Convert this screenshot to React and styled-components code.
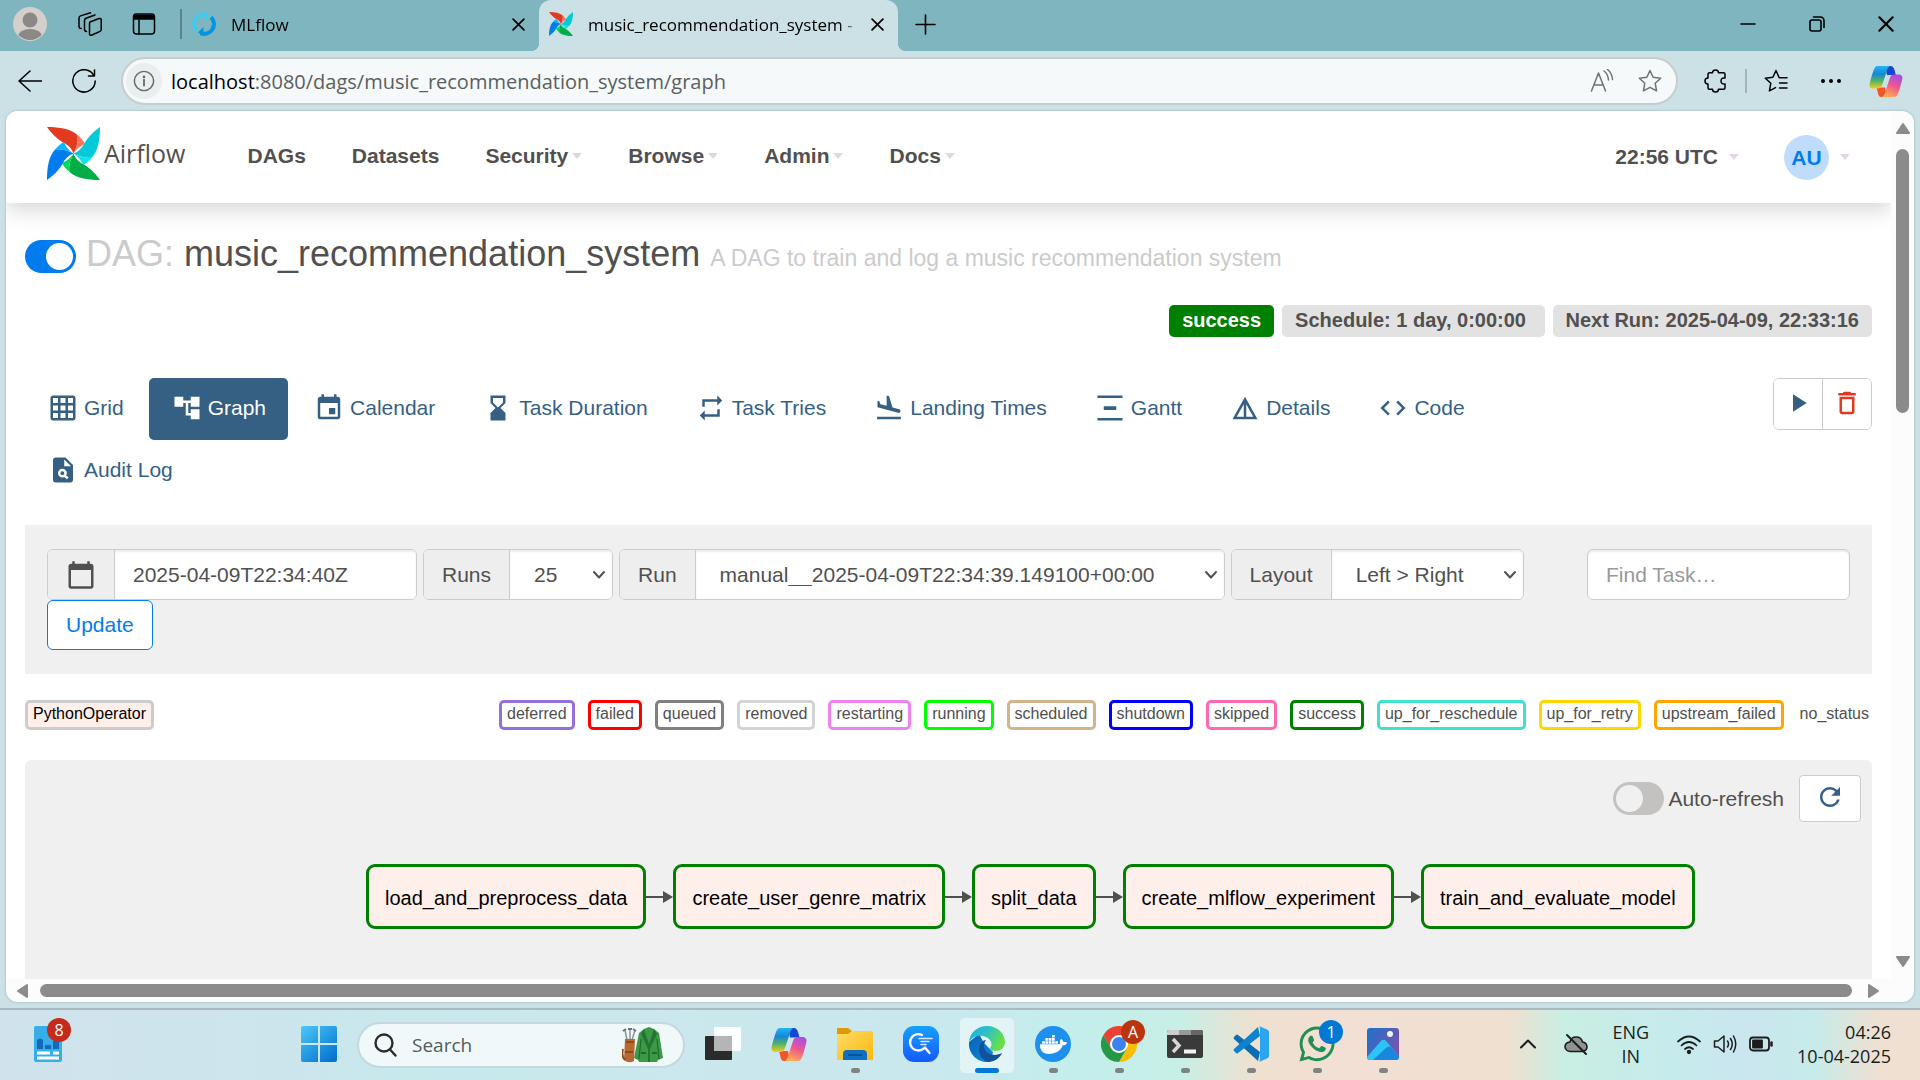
import React from "react";
import styled, { createGlobalStyle } from "styled-components";
import {
  MdGridOn, MdAccountTree, MdEvent, MdHourglassBottom, MdRepeat, MdFlightLand,
  MdVerticalDistribute, MdDetails, MdCode, MdPlagiarism, MdPlayArrow,
  MdDeleteOutline, MdCalendarToday, MdRefresh,
} from "react-icons/md";
import { FaDocker, FaWhatsapp } from "react-icons/fa6";

const ui = `"Segoe UI", "Open Sans", "Noto Sans", sans-serif`;
const arial = `"Liberation Sans", Arial, sans-serif`;

const GlobalStyle = createGlobalStyle`
  *, *::before, *::after { box-sizing: border-box; }
  body { margin: 0; background: #cbe1e5; }
  button, input, select { font: inherit; color: inherit; margin: 0; }
  button { cursor: pointer; }
  svg { display: block; flex: none; }
`;

const Desktop = styled.div`
  height: 100vh;
  display: flex;
  flex-direction: column;
  overflow: hidden;
  background: #cbe1e5;
  font-family: ${ui};
  color: #000;
`;

/* ---------- browser chrome ---------- */

const TabStrip = styled.header`
  flex: none;
  height: 51px;
  display: flex;
  background: #7fb5bf;
  font-size: 17px;
`;
const StripTools = styled.div`
  display: flex;
  align-items: center;
  height: 48px;
`;
const PlainButton = styled.button`
  flex: none;
  display: flex;
  align-items: center;
  justify-content: center;
  width: ${(p) => p.$w || 36}px;
  height: 36px;
  padding: 0;
  border: 0;
  background: none;
`;
const Tab = styled.div`
  position: relative;
  flex: none;
  display: flex;
  align-items: center;
  width: ${(p) => p.$w}px;
  height: 51px;
  padding: 0 6px 3px 10px;
  border-radius: 12px 12px 0 0;
  background: ${(p) => (p.$active ? "#cbe1e5" : "transparent")};
  ${(p) => p.$active && `
    &::before, &::after {
      content: "";
      position: absolute;
      bottom: 0;
      width: 8px;
      height: 8px;
    }
    &::before { left: -8px; background: radial-gradient(circle at 0 0, transparent 8px, #cbe1e5 8px); }
    &::after { right: -8px; background: radial-gradient(circle at 100% 0, transparent 8px, #cbe1e5 8px); }
  `}
`;
const TabTitle = styled.span`
  flex: 1;
  padding-left: 15px;
  white-space: nowrap;
  mask-image: linear-gradient(to right, #000 92%, transparent);
`;
const StripDivider = styled.span`
  width: 2px;
  height: 30px;
  margin-left: 12px;
  background: #5a838b;
`;
const NewTabSlot = styled.div`
  display: flex;
  align-items: center;
  height: 48px;
`;
const WindowControls = styled.div`
  display: flex;
  align-items: center;
  height: 48px;
  margin-left: auto;
`;

const Toolbar = styled.div`
  flex: none;
  display: flex;
  align-items: center;
  height: 60px;
  padding: 0 16px 0 12px;
`;
const NavButtons = styled.div`
  display: flex;
  gap: 18px;
  margin-right: 19px;
`;
const AddressBar = styled.div`
  flex: 1;
  display: flex;
  align-items: center;
  height: 48px;
  padding: 0 8px 0 3px;
  border: 2px solid #c9cccd;
  border-radius: 24px;
  background: #f5f9fa;
  font-size: 20px;
`;
const InfoDisc = styled.span`
  display: flex;
  align-items: center;
  justify-content: center;
  width: 36px;
  height: 36px;
  border-radius: 50%;
  background: #e9eeef;
`;
const Url = styled.span`
  flex: 1;
  padding-left: 9px;
  color: #5c5e5f;
  white-space: nowrap;
  b { color: #000; font-weight: 400; }
`;
const AddressIcons = styled.span`
  display: flex;
  gap: 12px;
`;
const ToolbarRight = styled.div`
  display: flex;
  align-items: center;
  gap: 11px;
  margin-left: 20px;
`;
const ToolbarDivider = styled.span`
  width: 2px;
  height: 24px;
  background: #a4b3b7;
`;

/* ---------- page frame with scrollbars ---------- */

const Frame = styled.div`
  flex: 1;
  min-height: 0;
  display: grid;
  grid-template: minmax(0, 1fr) 23px / minmax(0, 1fr) 23px;
  margin: 0 6px 6px;
  border-radius: 12px;
  overflow: hidden;
  background: #fcfcfc;
  box-shadow: 0 0 2px 1px #b3cbd0;
`;
const Page = styled.div`
  display: flex;
  flex-direction: column;
  overflow: hidden;
  background: #fff;
  color: #51504f;
  font-family: ${arial};
  font-size: 21px;
`;
const VScroll = styled.div`
  display: flex;
  flex-direction: column;
  align-items: center;
  padding: 10px 0;
`;
const HScroll = styled.div`
  display: flex;
  align-items: center;
  padding: 0 10px 0 9px;
  gap: 11px;
`;
const Thumb = styled.div`
  border-radius: 7px;
  background: #8b8b8b;
  ${(p) => (p.$vertical ? "width: 13px; height: 264px; margin: 14px 0 auto;" : "height: 13px; flex: 1; margin-right: 4px;")}
`;

/* ---------- Airflow navigation bar ---------- */

const NavBar = styled.nav`
  flex: none;
  display: flex;
  align-items: center;
  height: 92px;
  padding: 0 41px;
  background: #fff;
  box-shadow: 0 5px 22px rgba(0, 0, 0, 0.19);
  font-weight: 700;
`;
const Brand = styled.a`
  display: flex;
  align-items: center;
  gap: 4px;
  padding-bottom: 8px;
  margin-right: 39px;
  color: #51504f;
  text-decoration: none;
  font: 400 25px ${ui};
`;
const NavLink = styled.a`
  display: flex;
  align-items: center;
  gap: 4px;
  padding: 0 23px 2px;
  color: #51504f;
  text-decoration: none;
`;
const Caret = styled.span`
  border: solid transparent;
  border-width: 6px 5px 0;
  border-top-color: #e0d5e3;
`;
const NavRight = styled.div`
  display: flex;
  align-items: center;
  gap: 45px;
  margin-left: auto;
`;
const MenuButton = styled.button`
  display: flex;
  align-items: center;
  gap: 11px;
  padding: 0;
  border: 0;
  background: none;
`;
const Avatar = styled.span`
  width: 45px;
  height: 45px;
  border-radius: 50%;
  background: #c0dcfc;
  color: #017cee;
  line-height: 45px;
  text-align: center;
`;

/* ---------- DAG heading ---------- */

const Main = styled.main`
  flex: 1;
  min-height: 0;
  display: flex;
  flex-direction: column;
  padding: 30px 19px 0;
`;
const TitleRow = styled.div`
  flex: none;
  display: flex;
  align-items: flex-end;
  gap: 10px;
`;
const Switch = styled.input`
  appearance: none;
  flex: none;
  display: flex;
  width: 51px;
  height: 33px;
  padding: 3px;
  border-radius: 17px;
  background: #c4c2c1;
  &::before {
    content: "";
    width: 27px;
    height: 27px;
    border-radius: 50%;
    background: #f0f0f0;
  }
  &:checked { background: #017cee; justify-content: flex-end; }
  &:checked::before { background: #fff; }
`;
const Title = styled.h1`
  height: 40px;
  margin: 0;
  font-size: 36px;
  font-weight: 400;
  line-height: 42px;
  white-space: nowrap;
  color: #cbcbcb;
  a { color: #51504f; text-decoration: none; }
  small { font-size: 23px; line-height: 1; }
`;
const Badges = styled.div`
  flex: none;
  display: flex;
  justify-content: flex-end;
  gap: 8px;
  margin-top: 32px;
`;
const Badge = styled.a`
  height: 32px;
  padding: 0 13px;
  border-radius: 5px;
  background: ${(p) => (p.$success ? "#008000" : "#e2e2e2")};
  color: ${(p) => (p.$success ? "#fff" : "#51504f")};
  font-size: 20px;
  font-weight: 700;
  line-height: 31px;
  text-decoration: none;
`;

const ViewRow = styled.div`
  flex: none;
  display: flex;
  align-items: flex-start;
  justify-content: space-between;
  margin: 41px 0 23px;
`;
const Pills = styled.div`
  display: flex;
  flex-wrap: wrap;
  column-gap: 3px;
  width: 83%;
`;
const Pill = styled.a`
  display: flex;
  align-items: center;
  gap: 6px;
  height: 62px;
  padding: 0 22px 2px 23px;
  border-radius: 5px;
  background: ${(p) => (p.$active ? "#365f84" : "transparent")};
  color: ${(p) => (p.$active ? "#fff" : "#365f84")};
  text-decoration: none;
`;
const ButtonGroup = styled.div`
  display: flex;
  border: 1px solid #ccc;
  border-radius: 6px;
  overflow: hidden;
`;
const GroupButton = styled.button`
  display: flex;
  justify-content: center;
  align-items: center;
  width: 48px;
  height: 50px;
  padding: 0 0 2px;
  border: 0;
  background: #fff;
  color: ${(p) => p.$color};
  & + & { border-left: 1px solid #ccc; width: 49px; }
`;

/* ---------- run filter ---------- */

const Filter = styled.form`
  flex: none;
  display: flex;
  gap: 38px;
  padding: 24px 22px;
  background: #f0f0f0;
`;
const FilterFields = styled.div`
  flex: 1;
  display: flex;
  flex-wrap: wrap;
  column-gap: 6px;
`;
const InputGroup = styled.div`
  display: flex;
  height: 51px;
  border: 1px solid #ccc;
  border-radius: 6px;
  overflow: hidden;
  background: #fff;
`;
const Addon = styled.label`
  display: flex;
  align-items: center;
  padding: 0 18px;
  border-right: 1px solid #ccc;
  background: #eee;
`;
const TextInput = styled.input`
  width: ${(p) => p.$w}px;
  height: ${(p) => (p.$boxed ? 51 : 49)}px;
  padding: 0 18px;
  border: ${(p) => (p.$boxed ? "1px solid #ccc" : "0")};
  border-radius: ${(p) => (p.$boxed ? 6 : 0)}px;
  background: #fff;
  box-shadow: inset 0 2px 2px rgba(0, 0, 0, 0.075);
  &::placeholder { color: #999; opacity: 1; }
`;
const SelectBox = styled.div`
  display: grid;
  align-items: center;
  width: ${(p) => p.$w}px;
  > * { grid-area: 1 / 1; }
  > svg { justify-self: end; margin-right: 6px; pointer-events: none; }
`;
const Select = styled.select`
  appearance: none;
  width: 100%;
  height: 49px;
  padding: 0 24px;
  border: 0;
  background: #fff;
  box-shadow: inset 0 2px 2px rgba(0, 0, 0, 0.075);
`;
const UpdateButton = styled.button`
  height: 50px;
  padding: 0 18px;
  border: 1px solid #017cee;
  border-radius: 6px;
  background: #fff;
  color: #017cee;
`;

/* ---------- legend ---------- */

const Legend = styled.div`
  flex: none;
  display: flex;
  justify-content: space-between;
  margin: 26px 0 30px;
  font-size: 16px;
`;
const States = styled.div`
  display: flex;
  gap: 13px;
`;
const Tag = styled.span`
  height: 30px;
  padding: 0 ${(p) => (p.$color ? 5 : 3)}px;
  border: ${(p) => (p.$color ? `3px solid ${p.$color}` : "0")};
  border-radius: 5px;
  background: ${(p) => p.$fill || "#fff"};
  color: ${(p) => (p.$fill ? "#000" : "#51504f")};
  line-height: ${(p) => (p.$color ? 22 : 28)}px;
  white-space: nowrap;
`;

/* ---------- graph ---------- */

const GraphPanel = styled.section`
  flex: 1;
  padding: 15px 11px 0;
  border-radius: 6px 6px 0 0;
  background: #f0f0f0;
`;
const GraphTools = styled.div`
  display: flex;
  justify-content: flex-end;
  align-items: center;
  gap: 15px;
`;
const SwitchLabel = styled.label`
  display: flex;
  align-items: center;
  gap: 4px;
`;
const RefreshButton = styled.button`
  display: flex;
  align-items: center;
  justify-content: center;
  width: 62px;
  height: 47px;
  padding: 0 0 4px;
  border: 1px solid #ccc;
  border-radius: 4px;
  background: #fff;
  color: #365f84;
`;
const Flow = styled.div`
  display: flex;
  align-items: center;
  margin-top: 42px;
  padding-left: 330px;
`;
const Node = styled.div`
  height: 65px;
  padding: 2px 16px 0;
  border: 3px solid #008000;
  border-radius: 9px;
  background: #ffefeb;
  color: #000;
  font-size: 20px;
  line-height: 59px;
  white-space: nowrap;
`;

/* ---------- taskbar ---------- */

const Taskbar = styled.footer`
  flex: none;
  display: flex;
  align-items: center;
  height: 72px;
  padding: 0 29px 0 30px;
  border-top: 2px solid #a9b9bf;
  background: linear-gradient(90deg, #d0e3ec 0%, #cce5ec 15%, #c7e9ec 21%, #cbe7ed 42%, #c8e9ed 50%,
    #c4eeec 56%, #c7efe6 61.5%, #f0e0cf 65.5%, #f2e0d4 70%, #f0e0cf 78.5%, #c9eee3 81.5%, #c6ebec 87%, #cae6ef 91%, #c6ebea 94.5%, #f0e0d1 98%);
`;
const AppButton = styled.button`
  position: relative;
  flex: none;
  display: flex;
  flex-direction: column;
  align-items: center;
  justify-content: center;
  width: 56px;
  height: 57px;
  padding: 0 0 2px;
  border: 1px solid ${(p) => (p.$active ? "#d3e6ea" : "transparent")};
  border-radius: 6px;
  background: ${(p) => (p.$active ? "#e3f4f6" : "transparent")};
  &::after {
    content: "";
    position: absolute;
    bottom: 0;
    width: ${(p) => (p.$active ? 24 : 9)}px;
    height: 5px;
    border-radius: 3px;
    background: ${(p) => (p.$active ? "#0078d4" : p.$open ? "#7d8482" : "transparent")};
  }
`;
const CountBadge = styled.span`
  position: absolute;
  top: ${(p) => p.$top}px;
  right: ${(p) => p.$right}px;
  width: 24px;
  height: 24px;
  border-radius: 50%;
  background: ${(p) => p.$color};
  color: #fff;
  font-size: 16px;
  line-height: 24px;
  text-align: center;
`;
const Widgets = styled(AppButton)`
  width: 36px;
  margin-right: 225px;
`;
const Apps = styled.div`
  display: flex;
  align-items: center;
  gap: 10px;
`;
const SearchBox = styled.label`
  display: flex;
  align-items: center;
  width: 328px;
  height: 46px;
  padding: 0 19px 0 14px;
  border: 2px solid #c3d9de;
  border-radius: 23px;
  background: #f0f8fa;
  font-size: 19px;
  color: #555b5d;
  input {
    flex: 1;
    min-width: 0;
    padding: 0 0 0 15px;
    border: 0;
    outline: 0;
    background: none;
  }
  input::placeholder { color: #555b5d; opacity: 1; }
`;
const Tray = styled.div`
  display: flex;
  align-items: center;
  margin-left: auto;
  padding-bottom: 2px;
  font-size: 18px;
  line-height: 24px;
  color: #1c1c1c;
`;
const TrayText = styled.div`
  text-align: ${(p) => p.$align};
  white-space: nowrap;
`;
const Status = styled.div`
  display: flex;
  gap: 12px;
  margin: 0 24px 0 28px;
`;
const TrayIcons = styled.div`
  display: flex;
  gap: 24px;
  margin-right: 24px;
`;

/* ---------- drawings ---------- */

function Line({ size = 24, w = 1.5, color = "currentColor", children, box = "0 0 24 24", height }) {
  return (
    <svg width={size} height={height || size} viewBox={box} fill="none" stroke={color} strokeWidth={w}
      strokeLinecap="round" strokeLinejoin="round" aria-hidden="true">{children}</svg>
  );
}

const blades = [
  ["#e43921", "#ff7557", 0], ["#04c9d7", "#11e1ee", 90],
  ["#00ad46", "#04d659", 180], ["#017cee", "#0cb6ff", 270],
];
function Pinwheel({ size }) {
  return (
    <svg width={size} height={size} viewBox="0 0 53 53" aria-hidden="true">
      {blades.map(([dark, light, turn]) => (
        <g key={turn} transform={`rotate(${turn} 26.5 26.5)`}>
          <path fill={dark} d="M0 0C13 0 24 2 30.500 8C31.500 14 29.500 21 26.500 26.500C25 22 21 17.500 16 15.500C10 12 5 7 0 0Z" />
          <path fill={light} d="M30.500 8C34 11 36.500 14 38 17C33 19 29.500 22 26.500 26.500C29.500 21 31.500 14 30.500 8Z" />
        </g>
      ))}
    </svg>
  );
}

function MlflowMark() {
  return (
    <svg width="24" height="24" viewBox="0 0 24 24" fill="none" strokeWidth="4" aria-hidden="true">
      <path stroke="#43c9ed" d="M5 18.800A9.700 9.700 0 0 1 15.500 2.900" />
      <path fill="#43c9ed" d="M12.500 0L18 3.500L12.500 9Z" />
      <path stroke="#0194e2" d="M19 5.200A9.700 9.700 0 0 1 8.500 21.100" />
      <path fill="#0194e2" d="M11.500 24L6 20.500L11.500 15Z" />
    </svg>
  );
}

function Copilot({ size = 36 }) {
  return (
    <svg width={size} height={size - 3} viewBox="0 0 36 33" aria-hidden="true">
      <defs>
        <linearGradient id="cpa" x1="0" y1="0" x2="0" y2="1">
          <stop offset="0" stopColor="#23b5f2" /><stop offset=".35" stopColor="#1488d8" />
          <stop offset=".65" stopColor="#4fb06a" /><stop offset="1" stopColor="#f5cd1b" />
        </linearGradient>
        <linearGradient id="cpb" x1=".7" y1="0" x2=".3" y2="1">
          <stop offset="0" stopColor="#a64bea" /><stop offset=".5" stopColor="#f0598b" /><stop offset="1" stopColor="#ffb152" />
        </linearGradient>
      </defs>
      <path fill="#1846cf" d="M17 0H23C25 0 26 1.500 27 4L28.500 9.500H19Z" />
      <path fill="#f4532b" d="M8 23H17L19 33H13C10.500 33 10 31 9.500 29Z" />
      <path fill="url(#cpa)" d="M9 0H22C20 1.500 19 4 18 8L14 20C13 23 12 24 9 24H4.500C1 24 0 21.500.7 18.500C2 13 3.500 8 5 4C6 1.500 7 0 9 0Z" />
      <path fill="url(#cpb)" d="M27 33H14C16 31.500 17 29 18 25L22 13C23 10 24 9 27 9H31.500C35 9 36 11.500 35.300 14.500C34 20 32.500 25 31 29C30 31.500 29 33 27 33Z" />
    </svg>
  );
}

function Arrow() {
  return (
    <svg width="27" height="14" viewBox="0 0 27 14" aria-hidden="true">
      <path d="M0 7H19" stroke="#51504f" strokeWidth="2" />
      <path d="M17 1L27 7L17 13Z" fill="#51504f" />
    </svg>
  );
}

function Tri({ turn }) {
  return (
    <svg width="14" height="14" viewBox="0 0 14 14" aria-hidden="true">
      <path transform={`rotate(${turn} 7 7)`} fill="#8b8b8b" stroke="#8b8b8b" strokeLinejoin="round" strokeWidth="2" d="M7 3L13 12H1Z" />
    </svg>
  );
}

const Chevron = () => <Line size={14} w={2} box="0 0 14 14"><path d="M2 4L7 9.500L12 4" /></Line>;
const Cross = ({ s = 12 }) => <Line size={s} w={1.6} box="0 0 12 12"><path d="M1 1L11 11M11 1L1 11" /></Line>;
const starPath = "M12 1.500L15.100 8.300L22.700 9.200L17.200 14.300L18.600 21.800L12 18.300L5.400 21.800L6.800 14.300L1.300 9.200L8.900 8.300Z";

function Jacket() {
  return (
    <svg width="42" height="36" viewBox="0 0 42 36" aria-hidden="true">
      <path d="M5 13L3 3M8 13L8 2M10 13L13 3" stroke="#8c9499" strokeWidth="1.500" />
      <path d="M1 4L4 2M6 2H10M11 2L14 4" stroke="#6b7479" strokeWidth="2" />
      <path d="M3 12H13L12 34Q7 37 2 33Z" fill="#b8672f" />
      <path d="M4 15H12M3 25H11" stroke="#7e401b" strokeWidth="1.500" />
      <path d="M1 22Q-1 29 3 33" stroke="#8a4a22" strokeWidth="2" fill="none" />
      <path d="M22 2L27 0L32 2L37 6L41 31L36 33L35 35H17L16 33L12 31L17 6Z" fill="#3c9a47" />
      <path d="M22 2L27 17L32 2L35 7L28 22V35H26V22L19 7Z" fill="#237533" />
      <path d="M19 12L17 32M35 12L37 32" stroke="#1d6a2c" strokeWidth="1.200" />
      <path d="M19 26H24M30 26H35" stroke="#195b26" strokeWidth="1.500" />
    </svg>
  );
}

const TaskView = () => (
  <svg width="36" height="36" viewBox="0 0 36 36" aria-hidden="true">
    <rect x="0" y="10" width="27" height="24" rx="1" fill="#2b2b2b" />
    <rect x="9" y="1" width="27" height="24" rx="1" fill="#fff" opacity=".92" />
    <rect x="9" y="10" width="18" height="15" fill="#b5b5b5" />
  </svg>
);
const Folder = () => (
  <svg width="36" height="34" viewBox="0 0 36 34" aria-hidden="true">
    <defs><linearGradient id="fld" x1="0" y1="0" x2="1" y2="1"><stop offset="0" stopColor="#ffdc66" /><stop offset="1" stopColor="#fbb80d" /></linearGradient></defs>
    <path fill="#dd9c05" d="M0 2Q0 1 1 1H11L15 4L12 8H0Z" />
    <path fill="url(#fld)" d="M0 7H11L15 4H35L36 5V33H0Z" />
    <path fill="#0f6fc0" d="M6 33V27Q6 23 10 23H26Q30 23 30 27V33Z" />
    <path stroke="#084b8a" strokeWidth="1.500" d="M11 28H25" />
  </svg>
);
const SearchApp = () => (
  <svg width="36" height="36" viewBox="0 0 36 36" fill="none" aria-hidden="true">
    <defs><linearGradient id="sap" x1="0" y1="0" x2="0" y2="1"><stop offset="0" stopColor="#17a0ff" /><stop offset="1" stopColor="#1559ff" /></linearGradient></defs>
    <rect width="36" height="36" rx="11" fill="url(#sap)" />
    <path d="M19 9A8.200 8.200 0 1 0 20 23L22 21.500L26.500 27" stroke="#fff" strokeWidth="2.300" strokeLinecap="round" strokeLinejoin="round" />
    <path d="M16 12.500H29M18 15.500H26M18 18.500H23" stroke="#d5ebff" strokeWidth="1.600" strokeLinecap="round" />
  </svg>
);
const Edge = () => (
  <svg width="36" height="36" viewBox="0 0 36 36" aria-hidden="true">
    <defs>
      <linearGradient id="ed1" x1="0" y1="0" x2="1" y2=".4"><stop offset="0" stopColor="#1fb0e8" /><stop offset=".5" stopColor="#2cc0c8" /><stop offset="1" stopColor="#66e04a" /></linearGradient>
      <linearGradient id="ed2" x1="0" y1="0" x2="1" y2="1"><stop offset="0" stopColor="#0a62b0" /><stop offset="1" stopColor="#0b8ae0" /></linearGradient>
    </defs>
    <path fill="url(#ed2)" d="M0 16A18 18 0 0 0 22 35.500L24 26L15 17L10 8Z" />
    <path fill="#10529b" d="M10 23C11 17 14 14 17 14C14 18 14 24 19 27C24 30 29 29 33 27C31 32 25 36 19 36C13 34 10 29 10 23Z" />
    <path fill="url(#ed1)" d="M0 16C1 6 9 0 18 0C29 0 36 8 36 16C36 21 32 25 27 25C23 25 21 24 21 22C23 20 23 17 21 14C17 9 6 7 0 16Z" />
  </svg>
);
const Docker = () => (
  <svg width="36" height="36" viewBox="0 0 36 36" aria-hidden="true">
    <circle cx="18" cy="18" r="18" fill="#1d8fec" />
    <FaDocker x="5" y="5" size={27} color="#fff" />
  </svg>
);
const Chrome = () => (
  <svg width="36" height="36" viewBox="0 0 36 36" aria-hidden="true">
    <path fill="#fbbc05" d="M33.600 9H18V18L25.800 22.500L18 36A18 18 0 0 0 33.600 9Z" />
    <path fill="#249a48" d="M2.400 9A18 18 0 0 0 18 36L25.800 22.500L10.200 22.500Z" />
    <path fill="#e94235" d="M2.400 9A18 18 0 0 1 33.600 9H18L10.200 22.500Z" />
    <circle cx="18" cy="18" r="9" fill="#fff" /><circle cx="18" cy="18" r="7" fill="#3b82f1" />
  </svg>
);
const Terminal = () => (
  <svg width="36" height="28" viewBox="0 0 36 28" aria-hidden="true">
    <rect width="36" height="28" rx="2" fill="#3a3a3a" />
    <path fill="#ccc" d="M2 0H12V5H0V2Q0 0 2 0Z" /><path fill="#999" d="M12 0H24V5H12Z" /><path fill="#666" d="M24 0H34Q36 0 36 2V5H24Z" />
    <path d="M6 9L12 15.500L6 22" fill="none" stroke="#d6d6d6" strokeWidth="3.500" /><path d="M17 21.500H29" stroke="#f2f2f2" strokeWidth="4" />
  </svg>
);
const Code = () => (
  <svg width="36" height="36" viewBox="0 0 36 36" aria-hidden="true">
    <path fill="#0b6db5" d="M3 9L1 11Q0 12 1 13L25 35L27 26L5 9Q4 8 3 9Z" />
    <path fill="#0d83cf" d="M3 27L1 25Q0 24 1 23L25 1L27 10L5 27Q4 28 3 27Z" />
    <path fill="#2aa5f0" d="M26 0L35 4Q36 5 36 6V30Q36 31 35 32L26 36Q27 35 27 33V3Q27 1 26 0Z" />
  </svg>
);
const Photos = () => (
  <svg width="32" height="32" viewBox="0 0 32 32" aria-hidden="true">
    <defs><linearGradient id="pht" x1="0" y1="0" x2="1" y2=".6"><stop offset="0" stopColor="#1b73cc" /><stop offset="1" stopColor="#7a52b0" /></linearGradient></defs>
    <rect width="32" height="32" rx="3" fill="url(#pht)" />
    <path fill="#2cc4f5" d="M0 29L14 13Q16.500 10.500 19 13L32 28V29Q32 32 29 32H3Q0 32 0 29Z" />
    <path fill="#1a86dc" d="M6 32L19 20Q22 17 25 20L32 28Q32 32 29 32Z" />
    <circle cx="23" cy="6" r="3" fill="#f3f6fb" />
  </svg>
);
const WidgetIcon = () => (
  <svg width="28" height="36" viewBox="0 0 28 36" aria-hidden="true">
    <rect width="28" height="36" rx="2" fill="#35aeea" />
    <path fill="#1569ba" d="M3 14Q6 11 9 14V23H3ZM11 19H17V23H11ZM19 15H25V23H19Z" />
    <path stroke="#fff" strokeWidth="3" d="M3 27H16M19 27H25M3 32H25" />
  </svg>
);
const Windows = () => (
  <svg width="36" height="36" viewBox="0 0 36 36" aria-hidden="true">
    <defs><linearGradient id="win" gradientUnits="userSpaceOnUse" x1="0" y1="0" x2="30" y2="36"><stop offset="0" stopColor="#4cc8f8" /><stop offset="1" stopColor="#0573cf" /></linearGradient></defs>
    <path fill="url(#win)" d="M2 0H17V17H0V2Q0 0 2 0ZM19 0H34Q36 0 36 2V17H19ZM0 19H17V36H2Q0 36 0 34ZM19 19H36V34Q36 36 34 36H19Z" />
  </svg>
);

/* ---------- data ---------- */

const menu = [["DAGs"], ["Datasets"], ["Security", 1], ["Browse", 1], ["Admin", 1], ["Docs", 1]];
const views = [
  ["Grid", MdGridOn], ["Graph", MdAccountTree], ["Calendar", MdEvent], ["Task Duration", MdHourglassBottom],
  ["Task Tries", MdRepeat], ["Landing Times", MdFlightLand], ["Gantt", MdVerticalDistribute],
  ["Details", MdDetails], ["Code", MdCode], ["Audit Log", MdPlagiarism],
];
const states = [
  ["deferred", "mediumpurple"], ["failed", "red"], ["queued", "gray"], ["removed", "lightgrey"],
  ["restarting", "violet"], ["running", "lime"], ["scheduled", "tan"], ["shutdown", "blue"],
  ["skipped", "hotpink"], ["success", "green"], ["up_for_reschedule", "turquoise"],
  ["up_for_retry", "gold"], ["upstream_failed", "orange"], ["no_status", ""],
];
const tasks = ["load_and_preprocess_data", "create_user_genre_matrix", "split_data", "create_mlflow_experiment", "train_and_evaluate_model"];

function SelectField({ id, label, value, width }) {
  return (
    <InputGroup>
      <Addon htmlFor={id}>{label}</Addon>
      <SelectBox $w={width}>
        <Select id={id} defaultValue={value}><option>{value}</option></Select>
        <Chevron />
      </SelectBox>
    </InputGroup>
  );
}

function BrowserChrome() {
  return (
    <>
      <TabStrip>
        <StripTools>
          <PlainButton $w={60} aria-label="Profile">
            <svg width="34" height="34" viewBox="0 0 34 34">
              <defs><clipPath id="pfc"><circle cx="17" cy="17" r="16" /></clipPath></defs>
              <circle cx="17" cy="17" r="17" fill="#d3d0cc" />
              <g fill="#8b8886" clipPath="url(#pfc)"><circle cx="17" cy="13" r="7.500" /><ellipse cx="17" cy="30" rx="12" ry="8" /></g>
            </svg>
          </PlainButton>
          <PlainButton $w={60} aria-label="Workspaces">
            <Line>
              <path d="M12 10L21 6.500Q23.200 6 23.200 8V17.500Q23 19 21.500 19.600L14 23Q11.500 24 11.500 21.500V11.500Q11.500 10.300 12.500 9.900Z" />
              <path d="M8.500 19.500Q6.500 19.500 6.500 17V8.500Q6.500 7 8 6.300L17 3" />
              <path d="M3.200 16.500Q1 16.500 1 14V6Q1 4.500 2.500 3.900L12.500.8" />
            </Line>
          </PlainButton>
          <PlainButton $w={48} aria-label="Tab actions">
            <Line><rect x="1.500" y="2" width="21" height="20" rx="3" /><path d="M2 3.500H22V7H2Z" fill="#000" /><path d="M7 8V22" /></Line>
          </PlainButton>
          <StripDivider />
        </StripTools>
        <Tab $w={357}>
          <MlflowMark />
          <TabTitle>MLflow</TabTitle>
          <PlainButton $w={30} aria-label="Close tab"><Cross s={13} /></PlainButton>
        </Tab>
        <Tab $w={359} $active>
          <Pinwheel size={24} />
          <TabTitle>music_recommendation_system -</TabTitle>
          <PlainButton $w={30} aria-label="Close tab"><Cross s={13} /></PlainButton>
        </Tab>
        <NewTabSlot>
          <PlainButton $w={54} aria-label="New tab"><Line size={21} w={1.6} box="0 0 21 21"><path d="M10.500 1V20M1 10.500H20" /></Line></PlainButton>
        </NewTabSlot>
        <WindowControls>
          <PlainButton $w={69} aria-label="Minimize"><Line size={16} w={1.6} box="0 0 16 16"><path d="M1 8H15" /></Line></PlainButton>
          <PlainButton $w={69} aria-label="Restore">
            <Line size={16} w={1.6} box="0 0 16 16"><rect x="1" y="4" width="11" height="11" rx="2" /><path d="M4.500 1H11Q15 1 15 5V11.500" /></Line>
          </PlainButton>
          <PlainButton $w={69} aria-label="Close"><Cross s={16} /></PlainButton>
        </WindowControls>
      </TabStrip>
      <Toolbar>
        <NavButtons>
          <PlainButton aria-label="Back"><Line><path d="M12 2L1 12L12 22M1 12H24" /></Line></PlainButton>
          <PlainButton aria-label="Refresh"><Line><path d="M22 6.800A11.200 11.200 0 1 0 23.200 12M22.500 1V7H16.500" /></Line></PlainButton>
        </NavButtons>
        <AddressBar>
          <InfoDisc><Line size={22} w={1.6} color="#66696a"><circle cx="12" cy="12" r="10.500" /><path d="M12 10.500V17" strokeWidth="2" /><circle cx="12" cy="7.500" r=".6" /></Line></InfoDisc>
          <Url><b>localhost</b>:8080/dags/music_recommendation_system/graph</Url>
          <AddressIcons>
            <PlainButton aria-label="Read aloud"><Line color="#6f7273"><path d="M1.500 22L8.500 4L15.500 22M4 16H13M14 2Q18 5 18.500 11M17.500.5Q22 4 22.500 10.500" /></Line></PlainButton>
            <PlainButton aria-label="Favorite"><Line color="#6f7273"><path d={starPath} /></Line></PlainButton>
          </AddressIcons>
        </AddressBar>
        <ToolbarRight>
          <PlainButton aria-label="Extensions">
            <Line><path d="M8.500 3.800Q8.500 1 11.500 1Q14.500 1 14.500 3.800H19.500Q21 3.800 21 5.300V9Q17 8.500 17 12Q17 15.500 21 15V18.700Q21 20.200 19.500 20.200H14.500Q14.500 23 11.500 23Q8.500 23 8.500 20.200H5.500Q4 20.200 4 18.700V15Q1 15 1 12Q1 9 4 9V5.300Q4 3.800 5.500 3.800Z" /></Line>
          </PlainButton>
          <ToolbarDivider />
          <PlainButton aria-label="Favorites">
            <Line><path d="M23 8.700H15.200L12 1.500L8.900 8.300L1.300 9.200L6.800 14.300L5.400 21.800L11.500 18.600M15.500 14H23M15.500 19H23" /></Line>
          </PlainButton>
          <PlainButton $w={52} aria-label="Settings"><svg width="20" height="4" viewBox="0 0 20 4"><circle cx="2" cy="2" r="2" /><circle cx="10" cy="2" r="2" /><circle cx="18" cy="2" r="2" /></svg></PlainButton>
          <PlainButton aria-label="Copilot"><Copilot size={34} /></PlainButton>
        </ToolbarRight>
      </Toolbar>
    </>
  );
}

function AirflowPage() {
  return (
    <Page>
      <NavBar>
        <Brand href="#home"><Pinwheel size={53} />Airflow</Brand>
        {menu.map(([name, more]) => <NavLink key={name} href={`#${name}`}>{name}{more && <Caret />}</NavLink>)}
        <NavRight>
          <MenuButton>22:56 UTC<Caret /></MenuButton>
          <MenuButton><Avatar>AU</Avatar><Caret /></MenuButton>
        </NavRight>
      </NavBar>
      <Main>
        <TitleRow>
          <Switch type="checkbox" role="switch" defaultChecked aria-label="Pause DAG" />
          <Title>DAG: <a href="#dag">music_recommendation_system</a> <small>A DAG to train and log a music recommendation system</small></Title>
        </TitleRow>
        <Badges>
          <Badge $success href="#success">success</Badge>
          <Badge href="#schedule">Schedule: 1 day, 0:00:00&nbsp;</Badge>
          <Badge href="#next">Next Run: 2025-04-09, 22:33:16</Badge>
        </Badges>
        <ViewRow>
          <Pills>
            {views.map(([name, Icon]) => (
              <Pill key={name} href={`#${name}`} $active={name === "Graph"}><Icon size={30} />{name}</Pill>
            ))}
          </Pills>
          <ButtonGroup>
            <GroupButton $color="#365f84" aria-label="Trigger DAG"><MdPlayArrow size={30} /></GroupButton>
            <GroupButton $color="#e43921" aria-label="Delete DAG"><MdDeleteOutline size={30} /></GroupButton>
          </ButtonGroup>
        </ViewRow>
        <Filter>
          <FilterFields>
            <InputGroup>
              <Addon htmlFor="base-date" aria-label="Base date"><MdCalendarToday size={30} /></Addon>
              <TextInput id="base-date" $w={301} defaultValue="2025-04-09T22:34:40Z" />
            </InputGroup>
            <SelectField id="runs" label="Runs" value="25" width={102} />
            <SelectField id="run" label="Run" value="manual__2025-04-09T22:34:39.149100+00:00" width={528} />
            <SelectField id="layout" label="Layout" value="Left > Right" width={191} />
            <UpdateButton type="button">Update</UpdateButton>
          </FilterFields>
          <TextInput $boxed $w={263} placeholder="Find Task…" aria-label="Find Task" />
        </Filter>
        <Legend>
          <Tag $color="#ccc" $fill="#ffefeb">PythonOperator</Tag>
          <States>{states.map(([name, color]) => <Tag key={name} $color={color}>{name}</Tag>)}</States>
        </Legend>
        <GraphPanel>
          <GraphTools>
            <SwitchLabel><Switch type="checkbox" role="switch" />Auto-refresh</SwitchLabel>
            <RefreshButton aria-label="Refresh"><MdRefresh size={30} /></RefreshButton>
          </GraphTools>
          <Flow>
            {tasks.map((name, i) => <React.Fragment key={name}>{i > 0 && <Arrow />}<Node>{name}</Node></React.Fragment>)}
          </Flow>
        </GraphPanel>
      </Main>
    </Page>
  );
}

function SystemTaskbar() {
  return (
    <Taskbar>
      <Widgets aria-label="Widgets"><WidgetIcon /><CountBadge $color="#c42b1c" $top={0} $right={-6}>8</CountBadge></Widgets>
      <Apps>
        <AppButton aria-label="Start"><Windows /></AppButton>
        <SearchBox>
          <Line size={24} w={2.4} color="#2b2b2b"><circle cx="11" cy="10" r="8.500" /><path d="M17 16.500L22.500 22.500" /></Line>
          <input type="search" placeholder="Search" />
          <Jacket />
        </SearchBox>
        <AppButton aria-label="Task view"><TaskView /></AppButton>
        <AppButton aria-label="Copilot"><Copilot size={36} /></AppButton>
        <AppButton $open aria-label="File Explorer"><Folder /></AppButton>
        <AppButton aria-label="Search app"><SearchApp /></AppButton>
        <AppButton $active aria-label="Edge"><Edge /></AppButton>
        <AppButton $open aria-label="Docker"><Docker /></AppButton>
        <AppButton $open aria-label="Chrome"><Chrome /><CountBadge $color="#bb3410" $top={2} $right={1}>A</CountBadge></AppButton>
        <AppButton $open aria-label="Terminal"><Terminal /></AppButton>
        <AppButton $open aria-label="Code editor"><Code /></AppButton>
        <AppButton $open aria-label="WhatsApp"><FaWhatsapp size={40} color="#1f8f55" /><CountBadge $color="#0078d4" $top={2} $right={1}>1</CountBadge></AppButton>
        <AppButton $open aria-label="Photos"><Photos /></AppButton>
      </Apps>
      <Tray>
        <TrayIcons>
          <Line w={2}><path d="M5 15.500L12 8.500L19 15.500" /></Line>
          <Line w={1.6}><path d="M6.500 19.500H18Q23 19 23 14.500Q22.500 10.500 18.500 10Q17.500 5 12 5Q7 5 6 10Q1 10.500 1 15Q1.500 19 6.500 19.500Z" fill="#8f9493" /><path d="M3 3L22 22" strokeWidth="2" /></Line>
        </TrayIcons>
        <TrayText $align="center">ENG<br />IN</TrayText>
        <Status>
          <Line w={1.7}><path d="M1 9.500Q12-.5 23 9.500M4.500 13.500Q12 6.500 19.500 13.500M8 17Q12 13.500 16 17" /><circle cx="12" cy="20" r="1.300" fill="#1c1c1c" /></Line>
          <Line w={1.5}><path d="M1.500 9H5L11 4V20L5 15H1.500ZM14.500 9Q16.500 12 14.500 15M17.500 6.500Q21 12 17.500 17.500M20.500 4Q25 12 20.500 20" /></Line>
          <Line w={1.8}><rect x="1" y="5.500" width="19" height="13" rx="3" /><rect x="4" y="8.500" width="9" height="7" fill="#1c1c1c" /><path d="M22.500 10.500V13.500" strokeWidth="2.500" /></Line>
        </Status>
        <TrayText $align="right">04:26<br />10-04-2025</TrayText>
      </Tray>
    </Taskbar>
  );
}

export default function App() {
  return (
    <Desktop>
      <GlobalStyle />
      <BrowserChrome />
      <Frame>
        <AirflowPage />
        <VScroll><Tri turn={0} /><Thumb $vertical /><Tri turn={180} /></VScroll>
        <HScroll><Tri turn={-90} /><Thumb /><Tri turn={90} /></HScroll>
      </Frame>
      <SystemTaskbar />
    </Desktop>
  );
}
